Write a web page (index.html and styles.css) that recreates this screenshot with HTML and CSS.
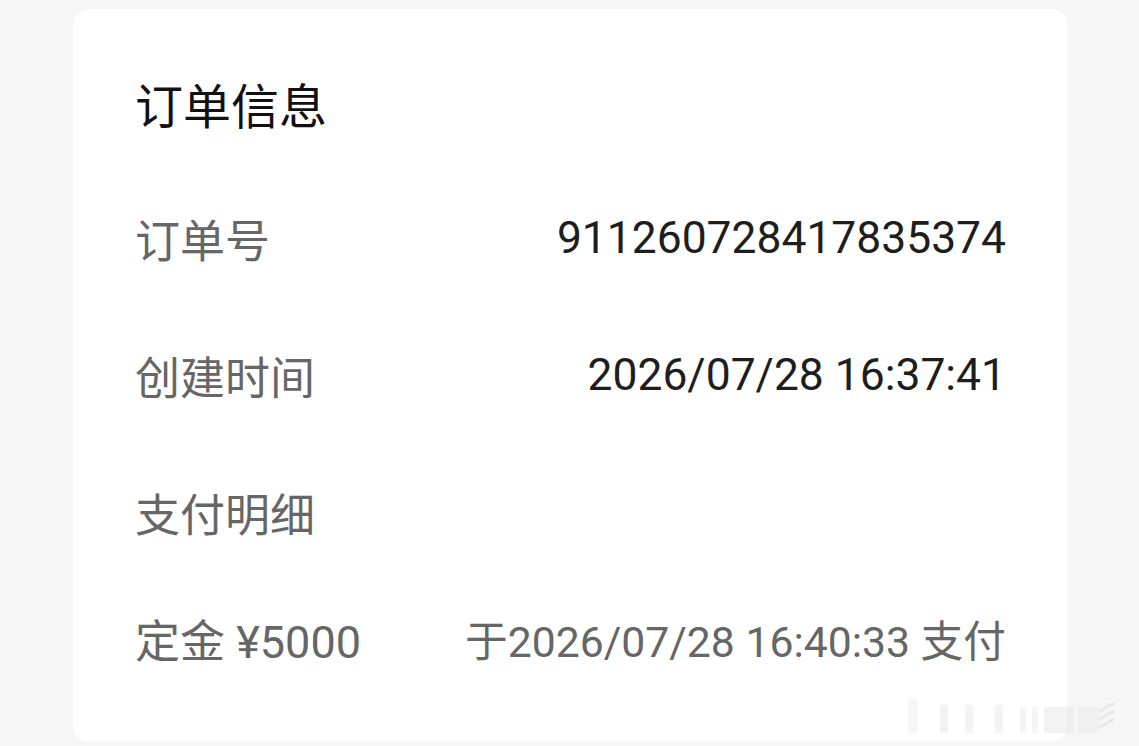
FILE: index.html
```html
<!DOCTYPE html>
<html lang="zh-CN">
<head>
<meta charset="utf-8">
<title>订单信息</title>
<link rel="stylesheet" href="styles.css">
</head>
<body>
<div class="page">
  <section class="card">
    <h1 class="title">订单信息</h1>
    <div class="row r1"><span class="label">订单号</span><span class="value">911260728417835374</span></div>
    <div class="row r2"><span class="label">创建时间</span><span class="value">2026/07/28 16:37:41</span></div>
    <div class="row r3"><span class="label">支付明细</span></div>
    <div class="row r4"><span class="label">定金 ¥5000</span><span class="value muted">于2026/07/28 16:40:33 支付</span></div>
  </section>
  <svg class="watermark" width="250" height="44" viewBox="0 0 250 44">
    <rect x="28" y="4" width="10" height="34" rx="4" fill="#e8e8e8" opacity="0.4"/>
    <rect x="60" y="10" width="8" height="28" fill="#e4e4e4" opacity="0.45"/>
    <rect x="85" y="10" width="8" height="28" fill="#e4e4e4" opacity="0.45"/>
    <rect x="115" y="10" width="8" height="28" fill="#e4e4e4" opacity="0.45"/>
    <rect x="140" y="12" width="6" height="26" fill="#e6e6e6" opacity="0.45"/>
    <rect x="152" y="12" width="6" height="26" fill="#e6e6e6" opacity="0.45"/>
    <rect x="164" y="12" width="30" height="26" fill="#e4e4e4" opacity="0.45"/>
    <rect x="198" y="12" width="22" height="26" fill="#e8e8e8" opacity="0.45"/>
    <path d="M220 16 l14 -8 M220 24 l14 -8 M220 32 l14 -8" stroke="#dedede" stroke-width="3" opacity="0.55"/>
  </svg>
</div>
</body>
</html>
```
FILE: styles.css
```css
html, body {
  margin: 0;
  padding: 0;
  background: #f6f6f6;
}
.page {
  position: relative;
  width: 1139px;
  height: 746px;
  overflow: hidden;
  padding: 9px 0 0 73px;
  box-sizing: border-box;
  font-family: "Roboto", "Noto Sans CJK SC", sans-serif;
}
.card {
  width: 994px;
  height: 733px;
  background: #ffffff;
  border-radius: 16px;
  box-sizing: border-box;
  padding: 64px 61px 0 62px;
  display: flex;
  flex-direction: column;
}
.title {
  margin: 0;
  font-size: 48px;
  font-weight: 400;
  line-height: 60px;
  color: #111111;
  font-family: "Noto Sans CJK SC", sans-serif;
}
.row {
  display: flex;
  justify-content: space-between;
  align-items: center;
  height: 60px;
  font-size: 44.4px;
}
.r1 { margin-top: 75px; }
.r2 { margin-top: 77px; }
.r3 { margin-top: 77px; }
.r4 { margin-top: 66px; }
.label {
  color: #666666;
  font-size: 45px;
}
.value {
  color: #1e1e1e;
}
.value.muted {
  color: #666666;
  font-size: 42.7px;
}
.watermark {
  position: absolute;
  left: 880px;
  top: 695px;
}
```
